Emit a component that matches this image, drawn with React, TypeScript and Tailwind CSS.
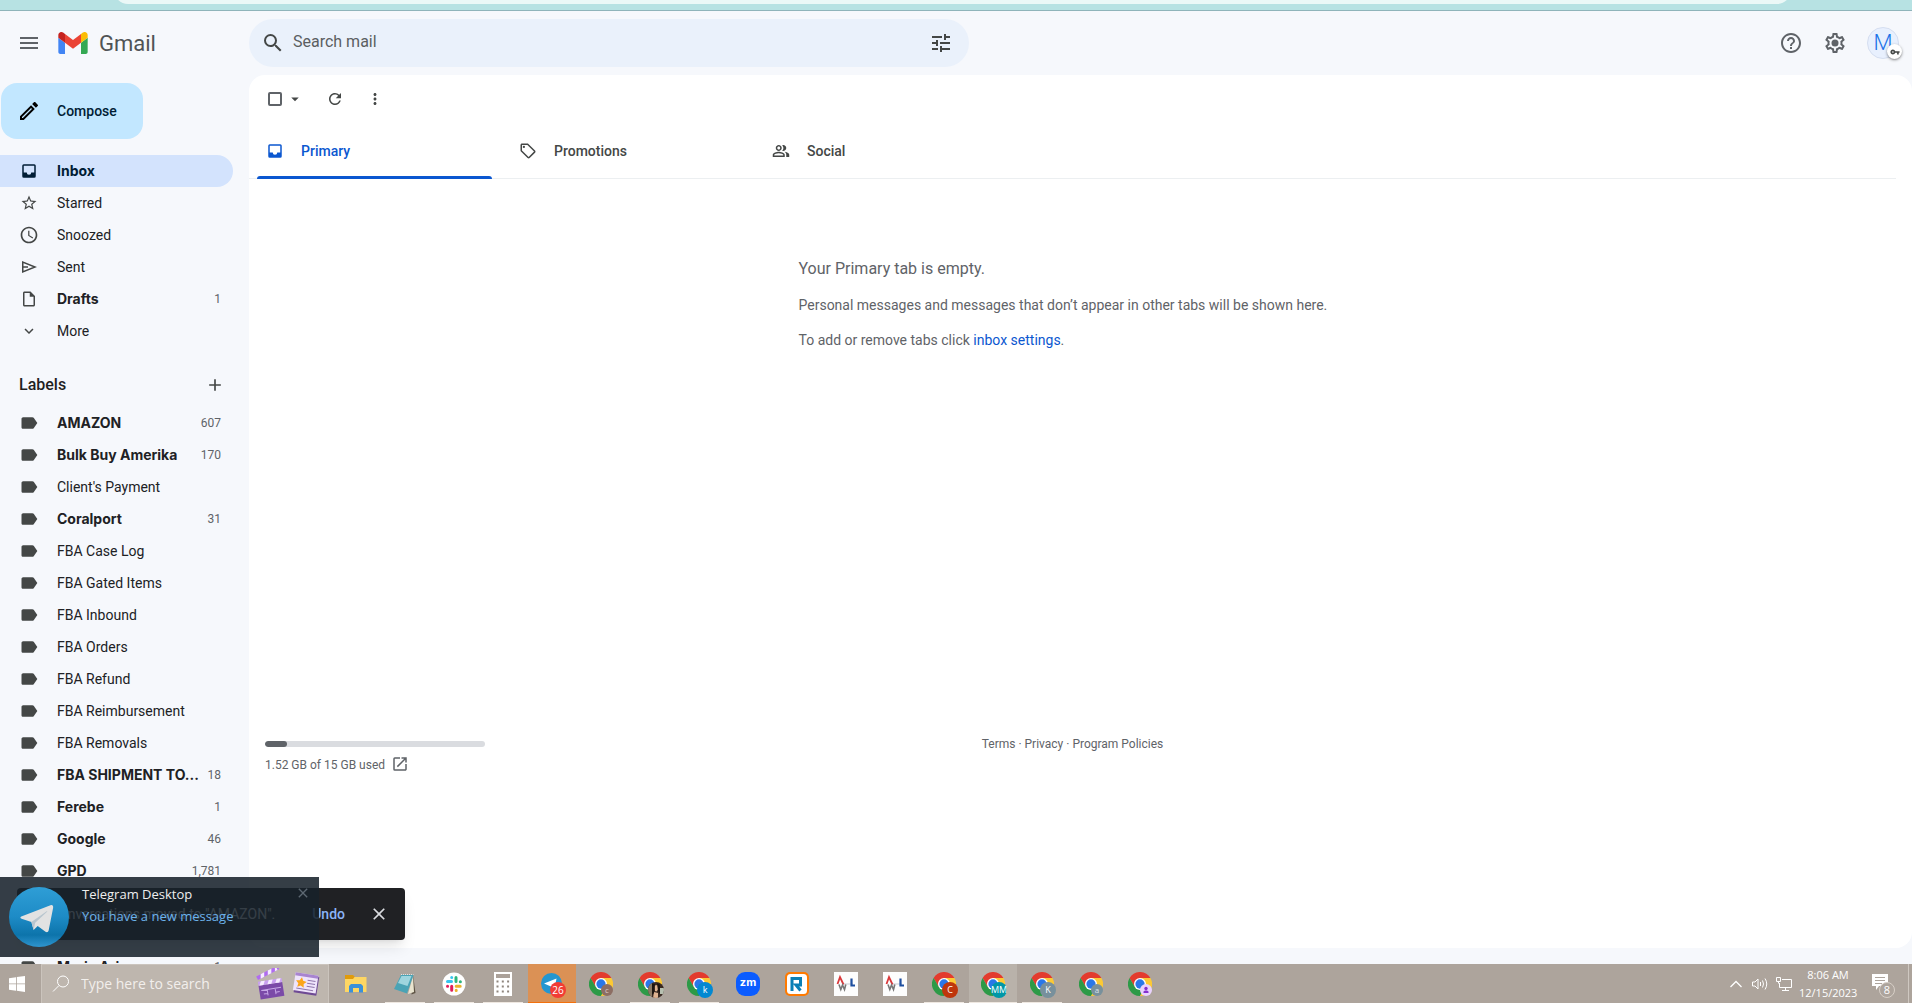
import React from "react";
import {
  MdMenu,
  MdSearch,
  MdTune,
  MdHelpOutline,
  MdRefresh,
  MdMoreVert,
  MdArrowDropDown,
  MdStarBorder,
  MdAccessTime,
  MdExpandMore,
  MdAdd,
  MdLabel,
  MdOutlineSell,
  MdOutlinePeopleAlt,
  MdOutlineInsertDriveFile,
  MdOutlineCreate,
  MdOpenInNew,
  MdClose,
  MdVpnKey,
} from "react-icons/md";

type Label = { name: string; count?: string };

const LABELS: Label[] = [
  { name: "AMAZON", count: "607" },
  { name: "Bulk Buy Amerika", count: "170" },
  { name: "Client's Payment" },
  { name: "Coralport", count: "31" },
  { name: "FBA Case Log" },
  { name: "FBA Gated Items" },
  { name: "FBA Inbound" },
  { name: "FBA Orders" },
  { name: "FBA Refund" },
  { name: "FBA Reimbursement" },
  { name: "FBA Removals" },
  { name: "FBA SHIPMENT TO...", count: "18" },
  { name: "Ferebe", count: "1" },
  { name: "Google", count: "46" },
  { name: "GPD", count: "1,781" },
];

function GmailLogo() {
  return (
    <svg viewBox="0 0 88 66" className="h-[22px] w-[30px]" aria-hidden="true">
      <path fill="#4285f4" d="M6 66h14V32L0 17v43c0 3.320 2.690 6 6 6" />
      <path fill="#34a853" d="M68 66h14c3.320 0 6-2.690 6-6V17L68 32" />
      <path fill="#fbbc04" d="M68 6v26l20-15V9c0-7.420-8.470-11.650-14.400-7.200" />
      <path fill="#ea4335" d="M20 32V6l24 18L68 6v26L44 50" />
      <path fill="#c5221f" d="M0 9v8l20 15V6l-5.600-4.200C8.460-2.650 0 1.580 0 9" />
    </svg>
  );
}

function InboxIcon() {
  return (
    <svg viewBox="0 0 24 24" className="size-[18px]" fill="currentColor" aria-hidden="true">
      <path
        fillRule="evenodd"
        d="M19 3H5a2 2 0 0 0-2 2v14a2 2 0 0 0 2 2h14a2 2 0 0 0 2-2V5a2 2 0 0 0-2-2zm0 11h-4a3 3 0 0 1-6 0H5V5h14z"
      />
    </svg>
  );
}

function SendIcon() {
  return (
    <svg
      viewBox="0 0 16 16"
      className="size-4"
      fill="none"
      stroke="currentColor"
      strokeWidth="1.500"
      aria-hidden="true"
    >
      <path d="M1.750 3v10L14 8zM2 8h5" />
    </svg>
  );
}

function GearIcon() {
  return (
    <svg viewBox="0 0 24 24" className="size-6" fill="currentColor" aria-hidden="true">
      <path d="M19.43 12.98c.04-.32.07-.64.07-.98 0-.34-.03-.66-.07-.98l2.110-1.650c.19-.15.24-.42.12-.64l-2-3.460c-.09-.16-.26-.25-.44-.25-.06 0-.12.01-.17.03l-2.490 1c-.52-.4-1.080-.73-1.690-.98l-.38-2.650C14.460 2.180 14.250 2 14 2h-4c-.25 0-.46.18-.49.42l-.38 2.650c-.61.25-1.170.59-1.690.98l-2.490-1c-.06-.02-.12-.03-.18-.03-.17 0-.34.09-.43.25l-2 3.460c-.13.22-.07.49.12.64l2.110 1.650c-.04.32-.07.65-.07.98 0 .33.03.66.07.98l-2.110 1.650c-.19.15-.24.42-.12.64l2 3.460c.09.16.26.25.44.25.06 0 .12-.01.17-.03l2.490-1c.52.4 1.080.73 1.690.98l.38 2.650c.03.24.24.42.49.42h4c.25 0 .46-.18.49-.42l.38-2.650c.61-.25 1.170-.59 1.690-.98l2.490 1c.06.02.12.03.18.03.17 0 .34-.09.43-.25l2-3.460c.12-.22.07-.49-.12-.64l-2.110-1.650zm-1.980-1.710c.04.31.05.52.05.73 0 .21-.02.43-.05.73l-.14 1.130.89.7 1.080.84-.7 1.210-1.270-.51-1.040-.42-.9.68c-.43.32-.84.56-1.250.73l-1.060.43-.16 1.130-.2 1.350h-1.400l-.19-1.350-.16-1.130-1.060-.43c-.43-.18-.83-.41-1.230-.71l-.91-.7-1.060.43-1.270.51-.7-1.210 1.080-.84.89-.7-.14-1.130c-.03-.31-.05-.54-.05-.74s.02-.43.05-.73l.14-1.130-.89-.7-1.080-.84.7-1.210 1.270.51 1.040.42.9-.68c.43-.32.84-.56 1.250-.73l1.060-.43.16-1.130.2-1.350h1.390l.19 1.350.16 1.130 1.060.43c.43.18.83.41 1.230.71l.91.7 1.060-.43 1.270-.51.7 1.210-1.070.85-.89.7.14 1.130z" />
      <circle cx="12" cy="12" r="3.5" />
    </svg>
  );
}

type NavRowProps = {
  icon: React.ReactNode;
  name: string;
  count?: string;
  bold?: boolean;
  active?: boolean;
};

function NavRow({ icon, name, count, bold, active }: NavRowProps) {
  return (
    <li>
      <a
        href="#"
        className={
          "flex h-8 items-center rounded-r-full pl-[19px] pr-3 " +
          (active ? "bg-[#d3e3fd] text-[#001d35]" : "text-[#202124]")
        }
      >
        <span
          className={
            "flex w-5 shrink-0 justify-center " + (active ? "text-[#001d35]" : "text-[#444746]")
          }
        >
          {icon}
        </span>
        <span
          className={
            "ml-[18px] flex-1 whitespace-nowrap text-sm " +
            (bold ? "font-['Inter',sans-serif] font-bold" : "")
          }
        >
          {name}
        </span>
        {count && <span className="text-xs text-[#5f6368]">{count}</span>}
      </a>
    </li>
  );
}

function Sidebar() {
  return (
    <aside className="flex w-[249px] shrink-0 flex-col overflow-hidden">
      <div className="pl-px pt-2">
        <button className="flex h-14 w-[142px] items-center rounded-2xl bg-[#c2e7ff] pl-4 text-sm font-medium text-[#001d35]">
          <MdOutlineCreate className="size-6 text-black" />
          <span className="ml-4">Compose</span>
        </button>
      </div>
      <ul className="mt-4 w-[233px]">
        <NavRow icon={<InboxIcon />} name="Inbox" bold active />
        <NavRow icon={<MdStarBorder className="size-[18px]" />} name="Starred" />
        <NavRow icon={<MdAccessTime className="size-5" />} name="Snoozed" />
        <NavRow icon={<SendIcon />} name="Sent" />
        <NavRow
          icon={<MdOutlineInsertDriveFile className="size-[18px]" />}
          name="Drafts"
          count="1"
          bold
        />
        <NavRow icon={<MdExpandMore className="size-[18px]" />} name="More" />
      </ul>
      <div className="mt-[26px] flex h-6 w-[233px] items-center justify-between pl-[19px] pr-2">
        <h2 className="text-base font-medium text-[#1f1f1f]">Labels</h2>
        <button aria-label="Create new label" className="text-[#444746]">
          <MdAdd className="size-5" />
        </button>
      </div>
      <ul className="mt-[10px] w-[233px]">
        {LABELS.map((l) => (
          <NavRow
            key={l.name}
            icon={<MdLabel className="size-5" />}
            name={l.name}
            count={l.count}
            bold={!!l.count}
          />
        ))}
        <li className="h-16" />
        <NavRow icon={<MdLabel className="size-5" />} name="Maria Ari" count="1" bold />
      </ul>
    </aside>
  );
}

function Header() {
  return (
    <header className="flex h-16 shrink-0 items-start pt-2">
      <div className="flex h-12 w-[249px] shrink-0 items-center pl-[17px]">
        <button aria-label="Main menu" className="text-[#5f6368]">
          <MdMenu className="size-6" />
        </button>
        <a href="#" className="ml-[17px] flex items-center">
          <GmailLogo />
          <span className="ml-[11px] pt-[2px] text-[22px] leading-6 text-[#505355]">Gmail</span>
        </a>
      </div>
      <form className="flex h-12 w-[720px] items-center rounded-full bg-[#eaf1fb] px-3 text-[#444746]">
        <button type="button" aria-label="Search">
          <MdSearch className="size-6" />
        </button>
        <input
          aria-label="Search mail"
          placeholder="Search mail"
          className="ml-2 h-8 flex-1 bg-transparent pb-1 text-base text-[#202124] outline-none placeholder:text-[#5b5e61]"
        />
        <button type="button" aria-label="Show search options" className="mr-1">
          <MdTune className="size-6" />
        </button>
      </form>
      <div className="ml-auto flex h-12 items-center pr-[13px] text-[#5f6368]">
        <button aria-label="Support">
          <MdHelpOutline className="size-6" />
        </button>
        <button aria-label="Settings" className="ml-5">
          <GearIcon />
        </button>
        <button
          aria-label="Account"
          className="relative ml-5 flex size-8 items-center justify-center rounded-full border border-[#d5def0] bg-[#e8f0fe] text-[22px] font-light leading-none text-[#1a73e8]"
        >
          M
          <span className="absolute -bottom-px -right-1 flex size-[15px] items-center justify-center rounded-full bg-white text-[#444746] shadow-sm shadow-black/40">
            <MdVpnKey className="size-[10px]" />
          </span>
        </button>
      </div>
    </header>
  );
}

function Tab({ icon, name, active }: { icon: React.ReactNode; name: string; active?: boolean }) {
  return (
    <button
      role="tab"
      aria-selected={!!active}
      className={
        "relative flex h-[55px] w-[253px] items-center pl-[17px] text-sm font-medium " +
        (active ? "text-[#0b57d0]" : "text-[#444746]")
      }
    >
      <span className="flex w-[18px] justify-center">{icon}</span>
      <span className="ml-[17px]">{name}</span>
      {active && (
        <span className="absolute -bottom-px left-2 right-[10px] h-[3px] rounded-t-full bg-[#0b57d0]" />
      )}
    </button>
  );
}

function MainPanel() {
  return (
    <main className="mb-4 flex min-w-0 flex-1 flex-col rounded-2xl bg-white text-[#5f6368]">
      <div className="flex h-12 items-center pl-[19px] text-[#444746]">
        <input
          type="checkbox"
          aria-label="Select all"
          className="size-[14px] appearance-none rounded-[2px] border-2 border-[#5f6368]"
        />
        <button aria-label="Select" className="ml-1">
          <MdArrowDropDown className="size-[18px]" />
        </button>
        <button aria-label="Refresh" className="ml-[22px]">
          <MdRefresh className="size-[18px]" />
        </button>
        <button aria-label="More" className="ml-[22px]">
          <MdMoreVert className="size-[18px]" />
        </button>
      </div>
      <div role="tablist" className="mr-4 flex border-b border-[#eceff1]">
        <Tab icon={<InboxIcon />} name="Primary" active />
        <Tab icon={<MdOutlineSell className="size-[18px]" />} name="Promotions" />
        <Tab icon={<MdOutlinePeopleAlt className="size-[18px]" />} name="Social" />
      </div>
      <section className="mr-4 mt-[78px] flex justify-center">
        <div className="w-[548px] text-sm leading-5">
          <h1 className="text-base leading-6">Your Primary tab is empty.</h1>
          <p className="mt-[14px]">
            Personal messages and messages that don’t appear in other tabs will be shown here.
          </p>
          <p className="mt-[15px]">
            To add or remove tabs click{" "}
            <a href="#" className="text-[#0b57d0]">
              inbox settings
            </a>
            .
          </p>
        </div>
      </section>
      <footer className="mr-4 mt-[386px] grid grid-cols-3 text-xs">
        <div className="pl-4 pt-[5px]">
          <div className="h-[6px] w-[220px] overflow-hidden rounded-full bg-[#dadce0]">
            <div className="h-full w-[10%] rounded-full bg-[#5f6368]" />
          </div>
          <div className="mt-2 flex items-center gap-[6px]">
            <span className="pt-px">1.52 GB of 15 GB used</span>
            <a href="#" aria-label="Manage storage">
              <MdOpenInNew className="size-[18px]" />
            </a>
          </div>
        </div>
        <p className="text-center">
          <a href="#">Terms</a> · <a href="#">Privacy</a> · <a href="#">Program Policies</a>
        </p>
      </footer>
    </main>
  );
}

function Snackbar() {
  return (
    <div className="absolute bottom-[63px] left-[17px] flex h-[52px] w-[388px] items-center rounded bg-[#202124] pl-6 pr-4 text-sm text-white shadow-lg">
      <span className="flex-1 whitespace-nowrap">3 conversations moved to &quot;AMAZON&quot;.</span>
      <button className="mr-6 font-medium text-[#8ab4f8]">Undo</button>
      <button aria-label="Close" className="text-[#dadce0]">
        <MdClose className="size-5" />
      </button>
    </div>
  );
}

function TelegramPopup() {
  return (
    <div className="absolute bottom-[46px] left-0 flex h-20 w-[319px] bg-[#17212b]/87 pl-[9px] font-['Open_Sans',sans-serif]">
      <svg viewBox="0 0 60 60" className="mt-[10px] size-[60px] shrink-0" aria-hidden="true">
        <defs>
          <linearGradient id="tg" x1="0" y1="0" x2="0" y2="1">
            <stop offset="0" stopColor="#2f9ed6" />
            <stop offset="0.5" stopColor="#1d8bc6" />
            <stop offset="0.8" stopColor="#0d74ab" />
            <stop offset="1" stopColor="#2f95cf" />
          </linearGradient>
        </defs>
        <circle cx="30" cy="30" r="30" fill="url(#tg)" />
        <path
          fill="#e2e2e2"
          d="M12.300 29.500 41.500 18.200c1.800-.6 3 .4 2.600 2.700l-4.400 22.400c-.4 1.900-1.700 2.400-3.200 1.500l-7.800-5.700-4.100 3.800-2.200-7.800-9.800-3.300c-1.500-.5-1.600-1.700-.3-2.300z"
        />
        <path
          fill="#b9c6cf"
          d="m22.400 35.100 14.900-10.600c.8-.5 1.400-.2.8.3L26.200 35.800l-1.600 7.100z"
        />
      </svg>
      <div className="ml-[13px] flex-1 pt-[7px] text-[13px] leading-5">
        <p className="text-[#eeeeee]">Telegram Desktop</p>
        <p className="mt-[2px] text-[#6cb2ec]">You have a new message</p>
      </div>
      <button aria-label="Dismiss" className="mr-2 mt-2 self-start text-[#5d6872]">
        <MdClose className="size-4" />
      </button>
    </div>
  );
}

function ChromeIcon({ children }: { children?: React.ReactNode }) {
  return (
    <span className="relative block size-6">
      <svg viewBox="0 0 48 48" className="size-6" aria-hidden="true">
        <path fill="#e33b2e" d="M3.200 12A24 24 0 0 1 44.800 12H24L13.600 30z" />
        <path fill="#2d9a47" d="M3.200 12 13.600 30 34.400 30 24 48A24 24 0 0 1 3.200 12z" />
        <path fill="#fcc934" d="M44.800 12A24 24 0 0 1 24 48L34.400 30 24 12z" />
        <circle cx="24" cy="24" r="12" fill="#fff" />
        <circle cx="24" cy="24" r="9.300" fill="#2a77e8" />
      </svg>
      {children}
    </span>
  );
}

function Badge({ tone, children }: { tone: string; children: React.ReactNode }) {
  return (
    <span
      className={
        "absolute -bottom-[2px] -right-[2px] flex size-4 items-center justify-center rounded-full text-[9px] leading-none text-white " +
        tone
      }
    >
      {children}
    </span>
  );
}

function SmallBadge({ tone, children }: { tone: string; children: React.ReactNode }) {
  return (
    <span
      className={
        "absolute bottom-0 right-0 flex size-3 items-center justify-center rounded-full text-[8px] leading-none " +
        tone
      }
    >
      {children}
    </span>
  );
}

function ZigzagIcon() {
  return (
    <svg viewBox="0 0 24 24" className="size-6" fill="none" aria-hidden="true">
      <path fill="#fdfdfd" d="M0 0h24v24H0z" />
      <path stroke="#c9cdd6" d="M9 12h10" />
      <path stroke="#d9383a" strokeWidth="1.800" d="m3.500 12 2.500-7 3.500 7.500" />
      <path stroke="#777" strokeWidth="1.600" d="m5 12.500 1.800 5L8.500 13l2 4.500 1.300-5" />
      <path stroke="#1e4fa0" strokeWidth="2.200" d="M17.500 6.500v7h3.500" />
    </svg>
  );
}

function ExplorerIcon() {
  return (
    <svg viewBox="0 0 22 20" className="h-5 w-[22px]" aria-hidden="true">
      <path fill="#e09b0c" d="M0 1h8l2 2h10v4H0z" />
      <path fill="#fdd663" d="M0 5h8l1.500-2H21.500v15H0z" />
      <path fill="#3c90d8" d="M4 18.500V12l2-2h10l2 2v6.500h-4V14H8v4.500z" />
    </svg>
  );
}

function NotepadIcon() {
  return (
    <svg viewBox="0 0 24 24" className="size-6" aria-hidden="true">
      <path fill="#5d5344" d="m20 3 2.500 18-4 1.500z" />
      <path fill="#e9e4cf" d="m20 4 1 16-6 2z" />
      <path fill="#4aa3b5" d="M8 3h12.500L14 21.500 1 17z" />
      <path fill="#9fd5de" d="M8.500 4h10L14.500 14 5 11z" />
      <path stroke="#d8e5e8" strokeWidth="1.200" strokeDasharray="1 1" d="M8 2.500h12.500" />
    </svg>
  );
}

function SlackIcon() {
  return (
    <svg viewBox="0 0 24 24" className="size-6" aria-hidden="true">
      <circle cx="12" cy="12" r="11.500" fill="#fff" />
      <g strokeWidth="3" strokeLinecap="round" fill="none">
        <path stroke="#36c5f0" d="M5.500 9.500h4M9.700 5.500v.1" />
        <path stroke="#2eb67d" d="M14 5.500v4M18.300 9.700h.1" />
        <path stroke="#ecb22e" d="M14.200 14.200h4M14.200 18.300v.1" />
        <path stroke="#e01e5a" d="M9.700 14.200v4M5.500 14.200h.1" />
      </g>
    </svg>
  );
}

function CalculatorIcon() {
  return (
    <svg viewBox="0 0 18 24" className="h-6 w-[18px]" aria-hidden="true">
      <path fill="#fff" d="M0 0h18v24H0z" />
      <path fill="#aba199" d="M2 2h14v4H2z" />
      <path
        stroke="#8f867e"
        strokeWidth="2"
        strokeDasharray="2 3.300"
        d="M2.500 9.500h14M2.500 14.500h14M2.500 19.500h14"
      />
    </svg>
  );
}

function TelegramTaskIcon() {
  return (
    <span className="relative block size-6">
      <svg viewBox="0 0 24 24" className="size-6" aria-hidden="true">
        <circle cx="11.500" cy="11.500" r="10.500" fill="#2496d0" />
        <path fill="#fff" d="m4 11.500 12.500-5-2 10.500-3.500-2.500z" />
      </svg>
      <Badge tone="bg-[#f23c34] text-[10px]">26</Badge>
    </span>
  );
}

function ClapperIcon() {
  return (
    <svg viewBox="0 0 30 32" className="h-8 w-[30px]" aria-hidden="true">
      <g transform="rotate(-9 15 20)">
        <path fill="#7b4aa8" d="M4 16h24v14H4z" />
        <path fill="#c9a0f0" d="M4 12h24v4H4z" />
        <path fill="#f6edff" d="m7 12-2 4h4l2-4zm8 0-2 4h4l2-4zm8 0-2 4h4l2-4z" />
        <path stroke="#c8a8e8" fill="none" d="M6 21h20M12 21v6M20 21v6M8 25h4M20 25h4" />
      </g>
      <g transform="rotate(-27 3 12)">
        <path fill="#b06cf0" d="M3 8h24v4H3z" />
        <path fill="#f6edff" d="m8 8-2 4h4l2-4zm8 0-2 4h4l2-4zm8 0-2 4h3V8z" />
      </g>
    </svg>
  );
}

function CardIcon() {
  return (
    <svg viewBox="0 0 28 26" className="h-[26px] w-7" aria-hidden="true">
      <g transform="rotate(9 14 13)">
        <path fill="#6e4a94" d="M3 4h23v19H3z" />
        <path fill="#efe4fb" d="M2 3h23v18H2z" />
        <path fill="#a884d0" d="M2 3h23v3H2z" />
        <path stroke="#8f76ac" d="M15 9h8M15 12h8M15 15h8M5 18.500h17" />
        <path
          fill="#fba51a"
          d="m9 7 1.700 3.300 3.700.5-2.700 2.600.6 3.700L9 15.400l-3.300 1.700.6-3.700-2.700-2.600 3.700-.5z"
        />
      </g>
    </svg>
  );
}

type TaskProps = {
  label: string;
  children: React.ReactNode;
  running?: boolean;
  tone?: string;
  line?: string;
};

function Task({ label, children, running, tone = "", line }: TaskProps) {
  return (
    <button
      aria-label={label}
      className={"relative flex w-12 items-center justify-center " + tone}
    >
      {children}
      {running && (
        <span className={"absolute bottom-0 h-px " + (line ?? "inset-x-1 bg-[#efe8e1]")} />
      )}
    </button>
  );
}

function Taskbar() {
  return (
    <div className="flex h-[39px] shrink-0 bg-[#ada49c] font-['Open_Sans',sans-serif] text-white">
      <button aria-label="Start" className="flex w-[41px] items-center pl-[9px]">
        <svg viewBox="0 0 16 16" className="size-4" fill="currentColor" aria-hidden="true">
          <path d="M0 2.200 7 1.200v6.300H0zM7.800 1.100 16 0v7.500H7.800zM0 8.300h7v6.400l-7-1zM7.800 8.300H16V16l-8.200-1.200z" />
        </svg>
      </button>
      <label className="flex w-72 items-center border border-b-0 border-[#cbc4bd] bg-[#beb6ae] pl-[10px]">
        <svg
          viewBox="0 0 18 18"
          className="size-[18px] shrink-0"
          fill="none"
          stroke="currentColor"
          aria-hidden="true"
        >
          <circle cx="11" cy="6.500" r="5.500" />
          <path d="M7 10.500 1 16.500" />
        </svg>
        <input
          aria-label="Type here to search"
          placeholder="Type here to search"
          className="ml-[11px] w-[160px] bg-transparent text-sm outline-none placeholder:text-[#f2efec]"
        />
        <span className="ml-[14px] flex items-center gap-[7px]">
          <ClapperIcon />
          <CardIcon />
        </span>
      </label>
      <div className="ml-[3px] flex gap-px">
        <Task label="File Explorer">
          <ExplorerIcon />
        </Task>
        <Task label="Notepad" running>
          <NotepadIcon />
        </Task>
        <Task label="Slack" running>
          <SlackIcon />
        </Task>
        <Task label="Calculator" running>
          <CalculatorIcon />
        </Task>
        <Task label="Telegram" running tone="bg-[#db9155]" line="inset-x-0 bg-[#f2700c]">
          <TelegramTaskIcon />
        </Task>
        <Task label="Chrome profile C">
          <ChromeIcon>
            <SmallBadge tone="bg-[#8d6e63] text-[#d9cdc8]">c</SmallBadge>
          </ChromeIcon>
        </Task>
        <Task label="Chrome profile photo" running>
          <ChromeIcon>
            <Badge tone="overflow-hidden bg-[#3a2a22]">
              <svg viewBox="0 0 16 16" className="size-4" aria-hidden="true">
                <path fill="#8a7a66" d="M0 0h4v16H0z" />
                <path fill="#b7c0b0" d="M12 6h4v6h-4z" />
                <path fill="#e0b391" d="M6.500 3.500 9.500 3l1 4-2 2.500L7 9zM6 10l4 1v5H5z" />
                <path fill="#1d1511" d="M4 2h3L6 11l-2 2zM9 1l3 2v9l-2-3z" />
              </svg>
            </Badge>
          </ChromeIcon>
        </Task>
        <Task label="Chrome profile k" running>
          <ChromeIcon>
            <Badge tone="bg-[#0288d1]">k</Badge>
          </ChromeIcon>
        </Task>
        <Task label="Zoom">
          <span className="flex size-6 items-center justify-center rounded-[9px] bg-[#0b5cff] pb-[2px] font-['Inter',sans-serif] text-[11px] font-bold leading-none">
            zm
          </span>
        </Task>
        <Task label="RingCentral">
          <svg viewBox="0 0 24 24" className="size-6" aria-hidden="true">
            <rect width="24" height="24" rx="5" fill="#ff7a00" />
            <rect x="2" y="2" width="20" height="20" rx="3.500" fill="#fff" />
            <path
              fill="none"
              stroke="#0b7fb5"
              strokeWidth="3"
              d="M7 19V6.500h8.500V13H11l4.500 5.500"
            />
          </svg>
        </Task>
        <Task label="AWL">
          <ZigzagIcon />
        </Task>
        <Task label="AWL second window">
          <ZigzagIcon />
        </Task>
        <Task label="Chrome profile C2" running>
          <ChromeIcon>
            <Badge tone="bg-[#bf360c]">C</Badge>
          </ChromeIcon>
        </Task>
        <Task
          label="Chrome profile MM"
          running
          tone="bg-[#b9b2aa]"
          line="inset-x-0 bg-[#efe8e1]"
        >
          <ChromeIcon>
            <Badge tone="bg-[#0097a7]">MM</Badge>
          </ChromeIcon>
        </Task>
        <Task label="Chrome profile K" running>
          <ChromeIcon>
            <Badge tone="bg-[#78909c]">K</Badge>
          </ChromeIcon>
        </Task>
        <Task label="Chrome profile a">
          <ChromeIcon>
            <SmallBadge tone="bg-[#78909c] text-[#dbe3e7]">a</SmallBadge>
          </ChromeIcon>
        </Task>
        <Task label="Chrome guest profile">
          <ChromeIcon>
            <SmallBadge tone="bg-[#e9d2fd]">
              <svg viewBox="0 0 8 8" className="size-2" fill="#8430ce" aria-hidden="true">
                <circle cx="4" cy="2.500" r="1.700" />
                <path d="M1.500 7V5.500L3 4.500h2l1.500 1V7z" />
              </svg>
            </SmallBadge>
          </ChromeIcon>
        </Task>
      </div>
      <div className="ml-auto flex items-center">
        <svg viewBox="0 0 12 8" className="h-2 w-3" fill="none" stroke="#fff" aria-hidden="true">
          <path strokeWidth="1.300" d="m.5 7 5.500-5.500L11.500 7" />
        </svg>
        <svg
          viewBox="0 0 16 14"
          className="ml-[10px] h-[14px] w-4"
          fill="none"
          stroke="#fff"
          aria-hidden="true"
        >
          <path d="M.5 5v4h2.500l3 3V2L3 5zM8.500 5v4M10.500 3.500q2 3.500 0 7M13 1.500q3.500 5.500 0 11" />
        </svg>
        <svg
          viewBox="0 0 16 14"
          className="ml-2 h-[14px] w-4"
          fill="none"
          stroke="#fff"
          aria-hidden="true"
        >
          <path d="M6 2.500h9.500v8h-12V6M9.500 10.500v3M6 13.500h7M.5.500h4v4h-4zM2.500 4.500v2" />
        </svg>
        <div className="ml-[7px] w-[58px] text-center text-[11px] leading-[18px]">
          <p>8:06 AM</p>
          <p>12/15/2023</p>
        </div>
        <div className="relative mb-1 ml-[15px] mr-[13px] h-4 w-[23px]">
          <svg viewBox="0 0 23 16" className="h-4 w-[23px]" aria-hidden="true">
            <path fill="#fff" d="M0 0h16v12H7l-3 4v-4H0z" />
            <path stroke="#ada49c" d="M3 3.500h10M3 6.500h10M3 9.500h7" />
          </svg>
          <span className="absolute -bottom-2 right-0 flex size-4 items-center justify-center rounded-full border border-[#d8d0c8] bg-[#ada49c] text-[11px] leading-none">
            8
          </span>
        </div>
        <span className="mr-[3px] h-full w-px self-stretch bg-[#cfc8c1]" />
      </div>
    </div>
  );
}

export default function App() {
  return (
    <div className="relative flex h-screen flex-col overflow-hidden bg-[#f6f8fc] font-['Roboto',sans-serif]">
      <div className="h-[11px] shrink-0 overflow-hidden border-b border-[#8fb4ba] bg-[#b7e2e3]">
        <div className="-mt-6 ml-[114px] mr-[121px] h-7 rounded-full bg-[#ebf8f7]" />
      </div>
      <Header />
      <div className="flex min-h-0 flex-1">
        <Sidebar />
        <MainPanel />
      </div>
      <Taskbar />
      <Snackbar />
      <TelegramPopup />
    </div>
  );
}
